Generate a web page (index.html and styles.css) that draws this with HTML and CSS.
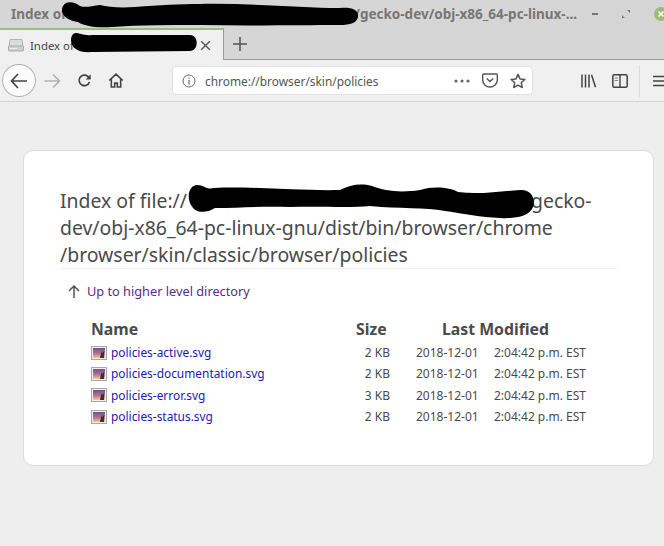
FILE: index.html
```html
<!DOCTYPE html>
<html lang="en">
<head>
<meta charset="utf-8">
<title>Index of file</title>
<link rel="stylesheet" href="styles.css">
</head>
<body>
<header class="chrome">
  <div class="titlebar">
    <span class="win-title">Index of</span>
    <span class="win-title win-title-rest">/gecko-dev/obj-x86_64-pc-linux-...</span>
    <div class="win-controls">
      <span class="wc-min"></span>
      <svg class="wc-max" width="8" height="8" viewBox="0 0 8 8"><path d="M5 0h3v3zM3 8H0V5z" fill="#777"/></svg>
      <svg class="wc-close" width="10" height="14" viewBox="0 0 10 14"><circle cx="7" cy="7" r="7" fill="#9dbb72"/><path d="M4.5 4.5l5 5M9.5 4.5l-5 5" stroke="#fff" stroke-width="1.6"/></svg>
    </div>
  </div>
  <div class="tabstrip">
    <div class="tab">
      <svg class="tab-icon" width="16" height="16" viewBox="0 0 16 16"><path d="M2 2.5h12l1 7H1z" fill="#dcdcdc" stroke="#b4b4b4"/><rect x="0.5" y="9" width="15" height="5" rx="1" fill="#cfcfcf" stroke="#ababab"/><rect x="2" y="11" width="7" height="1" fill="#eee"/></svg>
      <span class="tab-label">Index of</span>
      <svg class="tab-close" width="11" height="11" viewBox="0 0 11 11"><path d="M1.2 1.2l8.6 8.6M9.8 1.2l-8.6 8.6" stroke="#555" stroke-width="1.4"/></svg>
    </div>
    <svg class="newtab" width="14" height="14" viewBox="0 0 14 14"><path d="M7 0v14M0 7h14" stroke="#555" stroke-width="1.6"/></svg>
  </div>
  <nav class="navbar">
    <div class="backbtn">
      <svg width="18" height="16" viewBox="0 0 18 16"><path d="M8 1L1.5 8 8 15M2 8h15" fill="none" stroke="#444" stroke-width="1.7"/></svg>
    </div>
    <svg class="nav-forward" width="17" height="16" viewBox="0 0 17 16"><path d="M9 1.5L15.5 8 9 14.5M15 8H0.5" fill="none" stroke="#b0b0b0" stroke-width="1.6"/></svg>
    <svg class="nav-reload" width="15" height="15" viewBox="0 0 16 16"><path d="M13.2 9.5A5.6 5.6 0 1 1 11.5 3.6L14 6" fill="none" stroke="#444" stroke-width="1.8"/><path d="M14.6 1.4v5.4H9.2z" fill="#444"/></svg>
    <svg class="nav-home" width="16" height="15" viewBox="0 0 16 16"><path d="M0.8 8L8 1.2 15.2 8M3 6.5V15h3.6v-4.2h2.8V15H13V6.5" fill="none" stroke="#444" stroke-width="1.7"/></svg>
    <div class="urlbar">
      <svg class="url-info" width="14" height="14" viewBox="0 0 14 14"><circle cx="7" cy="7" r="6" fill="none" stroke="#666"/><path d="M7 6v4.5M7 3.4v1.4" stroke="#666" stroke-width="1.2"/></svg>
      <span class="url-text">chrome://browser/skin/policies</span>
      <svg class="url-dots" width="16" height="4" viewBox="0 0 16 4"><circle cx="2" cy="2" r="1.6" fill="#666"/><circle cx="8" cy="2" r="1.6" fill="#666"/><circle cx="14" cy="2" r="1.6" fill="#666"/></svg>
      <svg class="url-pocket" width="16" height="15" viewBox="0 0 16 15"><path d="M1.6 1h12.8a1 1 0 0 1 .9 1v5a7.3 7 0 0 1-14.6 0V2a1 1 0 0 1 .9-1z" fill="none" stroke="#555" stroke-width="1.4"/><path d="M4.8 5.5L8 8.5l3.2-3" fill="none" stroke="#555" stroke-width="1.5"/></svg>
      <svg class="url-star" width="16" height="16" viewBox="0 0 16 16"><path d="M8 1.4l2 4.5 4.9.5-3.7 3.3 1.1 4.8L8 12.1l-4.3 2.4 1.1-4.8L1.1 6.4 6 5.9z" fill="none" stroke="#555" stroke-width="1.5" stroke-linejoin="round"/></svg>
    </div>
    <svg class="nav-library" width="16" height="14" viewBox="0 0 16 14"><path d="M1 0.5v13M4.5 0.5v13M8 0.5v13M10.5 0.7l4 12.6" stroke="#444" stroke-width="1.5" fill="none"/></svg>
    <svg class="nav-sidebar" width="16" height="14" viewBox="0 0 16 14"><rect x="0.8" y="0.8" width="14.4" height="12.4" rx="1.5" fill="none" stroke="#444" stroke-width="1.5"/><path d="M8 1v12" stroke="#444" stroke-width="1.4"/><path d="M2.5 4h3.5M2.5 6.5h3.5" stroke="#888"/></svg>
    <span class="nav-sep"></span>
    <svg class="nav-menu" width="11" height="12" viewBox="0 0 11 12"><path d="M0 1.5h11M0 6h11M0 10.5h11" stroke="#444" stroke-width="1.5"/></svg>
  </nav>
</header>

<main class="page">
  <section class="card">
    <h1 class="heading">
      <span class="heading-line"><span>Index of file://</span><span class="heading-tail">gecko-</span></span>
      <span class="heading-line">dev/obj-x86_64-pc-linux-gnu/dist/bin/browser/chrome</span>
      <span class="heading-line">/browser/skin/classic/browser/policies</span>
    </h1>
    <p class="updir">
      <svg class="up-arrow" width="12" height="13" viewBox="0 0 12 13"><path d="M6 13V1.5M1 6l5-5 5 5" fill="none" stroke="#555" stroke-width="1.5"/></svg>
      <a class="updir-link" href="#">Up to higher level directory</a>
    </p>
    <table class="listing">
      <thead>
        <tr><th class="col-name">Name</th><th class="col-size">Size</th><th class="col-mod" colspan="2">Last Modified</th></tr>
      </thead>
      <tbody>
        <tr><td class="cell-name"><svg class="file-icon" viewBox="0 0 16 16"><use href="#img"/></svg><a href="#">policies-active.svg</a></td><td class="cell-size">2 KB</td><td class="cell-date">2018-12-01</td><td class="cell-time">2:04:42 p.m. EST</td></tr>
        <tr><td class="cell-name"><svg class="file-icon" viewBox="0 0 16 16"><use href="#img"/></svg><a href="#">policies-documentation.svg</a></td><td class="cell-size">2 KB</td><td class="cell-date">2018-12-01</td><td class="cell-time">2:04:42 p.m. EST</td></tr>
        <tr><td class="cell-name"><svg class="file-icon" viewBox="0 0 16 16"><use href="#img"/></svg><a href="#">policies-error.svg</a></td><td class="cell-size">3 KB</td><td class="cell-date">2018-12-01</td><td class="cell-time">2:04:42 p.m. EST</td></tr>
        <tr><td class="cell-name"><svg class="file-icon" viewBox="0 0 16 16"><use href="#img"/></svg><a href="#">policies-status.svg</a></td><td class="cell-size">2 KB</td><td class="cell-date">2018-12-01</td><td class="cell-time">2:04:42 p.m. EST</td></tr>
      </tbody>
    </table>
  </section>
</main>

<svg class="redactions" width="664" height="546" viewBox="0 0 664 546">
  <defs>
    <linearGradient id="sky" x1="0" y1="0" x2="0" y2="1"><stop offset="0" stop-color="#6a5488"/><stop offset=".55" stop-color="#b8709a"/><stop offset="1" stop-color="#f2d070"/></linearGradient>
    <symbol id="img" viewBox="0 0 16 16"><rect x="0.5" y="1.5" width="15" height="13" fill="#efefef" stroke="#a8a8a8"/><rect x="2" y="3" width="12" height="10" fill="url(#sky)"/><path d="M9 13l1.5-7 1 2 1.5-2.5V13z" fill="#3a3040"/></symbol>
  </defs>
  <path d="M66 3 C71 1 76 3 80 6 C84 8 92 6 100 5 C108 7 120 8 135 7 C160 5 180 4 200 4 C250 3 300 8 340 8 C352 7 359 10 358 17 C357 23 350 25 340 25 C300 25 250 26 200 25 C170 25 140 25 112 27 C95 28 84 26 78 22 C70 21 62 17 62 10 C62 7 63 5 66 3 Z" fill="#000"/>
  <path d="M75 33 C80 33 84 36 92 35 L190 35 C199 35 199 51 190 51 L92 52 C80 53 71 49 71 40 C71 37 72 34 75 33 Z" fill="#000"/>
  <path d="M196 185 C203 184 206 190 214 188 C250 186 300 191 340 190 C350 185 360 183 372 186 C385 191 400 193 420 190 C432 186 450 187 458 192 C480 195 500 191 520 190 C530 189 536 197 533 207 C530 216 515 219 500 218 C480 217 465 214 445 211 C425 207 400 209 370 206 C350 208 320 206 290 207 C260 206 240 208 215 208 C205 214 195 213 191 205 C187 198 188 187 196 185 Z" fill="#000"/>
</svg>
</body>
</html>
```

FILE: styles.css
```css
* { box-sizing: border-box; }
html, body { margin: 0; height: 100%; }
body {
  width: 664px;
  height: 546px;
  overflow: hidden;
  background: #eeeeee;
  font-family: "Noto Sans", "Open Sans", sans-serif;
  color: #4a4a4a;
  position: relative;
}
.chrome { display: flex; flex-direction: column; height: 102px; }
.titlebar {
  height: 28px;
  background: #d6d6d6;
  display: flex;
  align-items: center;
  padding-left: 11px;
  font-size: 13.5px;
  font-weight: 700;
  color: #767676;
}
.win-title { white-space: nowrap; flex: none; }
.win-title-rest { margin-left: 288px; }
.win-controls { margin-left: auto; display: flex; align-items: center; gap: 24px; }
.wc-min { width: 6px; height: 2px; background: #777; }
.tabstrip {
  height: 32px;
  background: #d6d6d6;
  display: flex;
  align-items: stretch;
  border-bottom: 1px solid #9a9a9a;
}
.tab {
  width: 224px;
  height: 32px;
  background: #f0f0f0;
  border-top: 2px solid #9dbb86;
  border-right: 1px solid #9a9a9a;
  display: flex;
  align-items: center;
  padding-left: 8px;
  font-size: 11.4px;
  color: #444;
}
.tab-label { margin-left: 6px; }
.tab-close { margin-left: auto; margin-right: 12px; }
.newtab { align-self: center; margin-left: 9px; }
.navbar {
  height: 42px;
  background: #f0f0f0;
  border-bottom: 1px solid #d4d4d4;
  display: flex;
  align-items: center;
  padding-left: 2px;
}
.navbar > * { flex: none; }
.backbtn {
  width: 34px; height: 33px;
  border-radius: 50%;
  border: 1px solid #b0b0b0;
  background: #fbfbfb;
  display: flex;
  align-items: center;
  justify-content: center;
}
.nav-forward { margin-left: 8px; }
.nav-reload { margin-left: 16px; }
.nav-home { margin-left: 16px; }
.urlbar {
  width: 361px;
  height: 29px;
  margin-left: 48px;
  background: #fff;
  border: 1px solid #e2e2e2;
  border-radius: 4px;
  display: flex;
  align-items: center;
  padding-left: 9px;
  font-size: 11.9px;
  color: #555;
}
.url-text { margin-left: 9px; }
.url-dots { margin-left: auto; }
.url-pocket { margin-left: 12px; }
.url-star { margin-left: 12px; margin-right: 6px; }
.nav-library { margin-left: 48px; }
.nav-sidebar { margin-left: 15px; }
.nav-sep { width: 1px; height: 32px; background: #dcdcdc; margin-left: 11px; }
.nav-menu { margin-left: 13px; }
.page { padding: 48px 11px 0 23px; }
.card {
  width: 631px;
  height: 316px;
  background: #fff;
  border: 1px solid #dcdcdc;
  border-radius: 10px;
  padding: 36px 36px 0 36px;
}
.heading {
  margin: 0;
  font-size: 19.4px;
  font-weight: 400;
  line-height: 27px;
  color: #4a4a4a;
  border-bottom: 1px solid #eeeeee;
  height: 82px;
}
.heading-line { display: block; }
.heading-tail { margin-left: 344px; }
.updir { margin: 13px 0 0 8px; display: flex; align-items: center; font-size: 12.75px; line-height: 18px; }
.up-arrow { margin-right: 7px; }
.updir-link { color: #5b2a86; text-decoration: none; }
.listing { border-collapse: collapse; margin: 19px 0 0 31px; }
.listing th { font-size: 15.8px; font-weight: 700; text-align: left; padding: 0 0 3px; line-height: 20px; }
.listing td { font-size: 12px; line-height: 21.3px; padding: 0; color: #4a4a4a; }
.col-name { width: 265px; }
.col-size { width: 60px; }
.col-mod { padding-left: 26px !important; }
.cell-name { display: flex; align-items: center; }
.cell-name a { color: #1a1ab0; text-decoration: none; font-size: 11.9px; }
.file-icon { width: 16px; height: 16px; margin-right: 4px; }
.cell-size { text-align: right; padding-right: 26px !important; }
.cell-date { width: 78px; }
.redactions { position: absolute; left: 0; top: 0; pointer-events: none; }
```
